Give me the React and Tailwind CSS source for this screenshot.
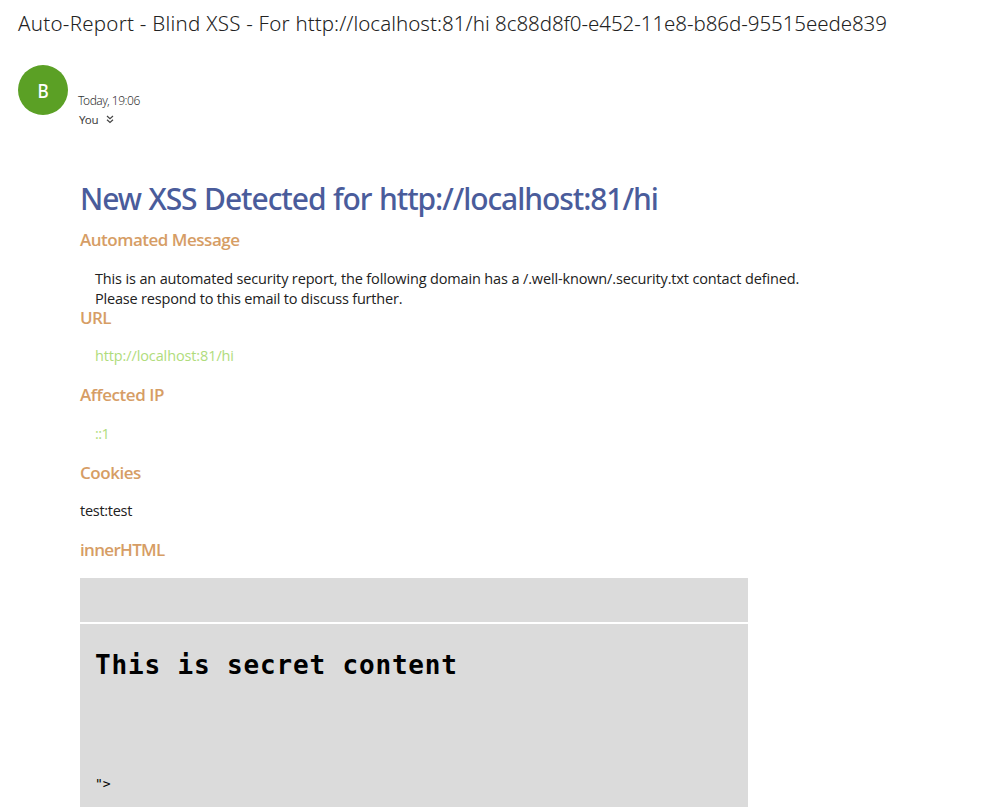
function Heading({ className, children }) {
  return (
    <h3
      className={`h-6 whitespace-nowrap font-['Open_Sans','Noto_Sans',sans-serif] text-[17px] leading-6 font-semibold text-[#d69d65] ${className}`}
    >
      {children}
    </h3>
  );
}

function Text({ className, children }) {
  return (
    <p className={`whitespace-nowrap font-['Open_Sans','Noto_Sans',sans-serif] text-[14.5px] leading-5 ${className}`}>
      {children}
    </p>
  );
}

function MessageHeader() {
  return (
    <header className="flex h-[50px] items-start">
      <div className="flex size-[50px] shrink-0 items-center justify-center rounded-full bg-[#5ba025] pt-0.5 text-[19px] font-medium text-white">
        <span className="scale-x-90">B</span>
      </div>
      <div className="ml-2.5 pt-[26px] whitespace-nowrap">
        <div className="h-[19px] text-[12px] leading-[19px] font-light tracking-[-0.48px] text-[#333]">Today, 19:06</div>
        <div className="ml-px flex h-[19px] items-center text-[11.5px] leading-[19px] tracking-[-0.2px] text-[#444]">
          <span>You</span>
          <svg width="8" height="9" viewBox="0 0 8 9" className="ml-2" fill="none" stroke="#444" strokeWidth="1.2">
            <path d="M1 1 L4 3.7 L7 1 M1 4.8 L4 7.5 L7 4.8" />
          </svg>
        </div>
      </div>
    </header>
  );
}

export default function App() {
  return (
    <main className="h-[807px] w-[992px] overflow-hidden bg-white pt-2 pl-[18px] font-['Noto_Sans',sans-serif] text-[#222]">
      <div className="h-[30px] whitespace-nowrap text-[20.5px] leading-[30px] font-[350]">
        <span className="tracking-[0.26px]">Auto-Report - Blind XSS - For </span>
        <span className="tracking-[0.03px]">http://localhost:81/hi </span>
        <span className="tracking-[-0.06px]">8c88d8f0-e452-11e8-b86d-95515eede839</span>
      </div>
      <div className="pt-[27px]">
        <MessageHeader />
      </div>

      <article className="ml-[62px] pt-16">
        <h1 className="h-10 whitespace-nowrap text-[30px] leading-10 font-medium tracking-[-1.07px] [word-spacing:0.8px] text-[#4a5c9b]">
          New XSS Detected for http://localhost:81/hi
        </h1>

        <Heading className="mt-[9px] tracking-[-0.49px]">Automated Message</Heading>
        <Text className="mt-[17px] ml-[15px] tracking-[-0.145px] text-[#212121]">
          This is an automated security report, the following domain has a /.well-known/.security.txt contact defined.
          <br />
          <span className="tracking-[-0.19px]">Please respond to this email to discuss further.</span>
        </Text>

        <Heading className="-mt-[3px] tracking-[-0.6px]">URL</Heading>
        <Text className="mt-4 ml-[15px] tracking-[-0.12px] text-[#b0dc7c]">http://localhost:81/hi</Text>

        <Heading className="mt-[17px] tracking-[-0.45px]">Affected IP</Heading>
        <Text className="mt-[17px] ml-[15px] tracking-[-0.5px] text-[#b0dc7c]">::1</Text>

        <Heading className="mt-[17px] tracking-[-0.45px]">Cookies</Heading>
        <Text className="mt-4 tracking-[-0.28px] text-[#212121]">test:test</Text>

        <Heading className="mt-[17px] tracking-[-0.68px]">innerHTML</Heading>

        <div className="mt-4 flex w-[668px] flex-col gap-0.5 font-['DejaVu_Sans_Mono',monospace] text-black">
          <div className="h-11 bg-[#dbdbdb]" />
          <div className="h-[183px] bg-[#dbdbdb] px-[15px] pt-[23px]">
            <h2 className="h-9 whitespace-nowrap text-[26px] leading-9 font-bold tracking-[0.84px]">
              This is secret content
            </h2>
            <div className="mt-[91px] h-5 text-[13px] leading-5">{'">'}</div>
          </div>
        </div>
      </article>
    </main>
  );
}
